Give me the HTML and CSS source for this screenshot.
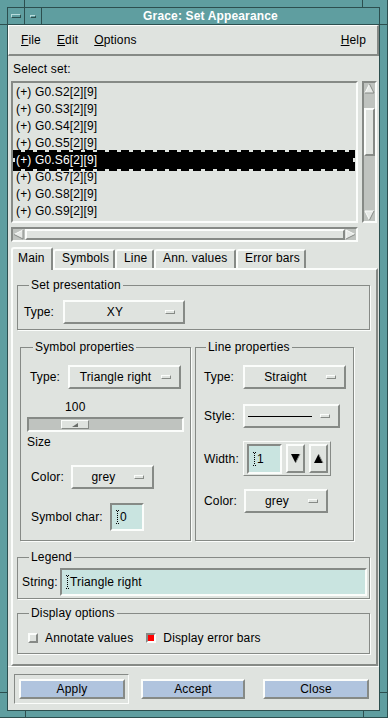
FILE: index.html
```html
<!DOCTYPE html>
<html lang="en">
<head>
    <meta charset="UTF-8">
    <title>Grace: Set Appearance</title>
    <link rel="stylesheet" href="styles.css">
</head>
<body>
<div class="frame">
  <div class="window">
    <div class="titlebar">
        <span class="tb-btn"><i class="tb-menu"></i></span>
        <span class="tb-btn"><i class="tb-min"></i></span>
        <span class="title">Grace: Set Appearance</span>
    </div>
    <div class="dialog">
        <div class="menubar">
            <span><u>F</u>ile</span>
            <span><u>E</u>dit</span>
            <span><u>O</u>ptions</span>
            <span class="help"><u>H</u>elp</span>
        </div>

        <div class="content">
            <div class="caption">Select set:</div>
            <div class="scrolled">
                <ul class="setlist">
                    <li>(+) G0.S2[2][9]</li>
                    <li>(+) G0.S3[2][9]</li>
                    <li>(+) G0.S4[2][9]</li>
                    <li>(+) G0.S5[2][9]</li>
                    <li class="sel">(+) G0.S6[2][9]</li>
                    <li>(+) G0.S7[2][9]</li>
                    <li>(+) G0.S8[2][9]</li>
                    <li>(+) G0.S9[2][9]</li>
                </ul>
                <div class="vscroll">
                    <svg width="11" height="11" viewBox="0 0 11 11"><path d="M5.5 1L10 10H1z" fill="#e6e9e6"/><path d="M5.5 1L1 10" stroke="#fbfdfb" fill="none"/><path d="M5.5 1L10 10H1" stroke="#868a86" fill="none"/></svg>
                    <span class="thumb"></span>
                    <svg class="end" width="11" height="11" viewBox="0 0 11 11"><path d="M1 1H10L5.5 10z" fill="#e6e9e6"/><path d="M10 1H1L5.5 10" stroke="#fbfdfb" fill="none"/><path d="M10 1L5.5 10" stroke="#868a86" fill="none"/></svg>
                </div>
                <div class="hscroll">
                    <svg width="11" height="11" viewBox="0 0 11 11"><path d="M1 5.5L10 1V10z" fill="#e6e9e6"/><path d="M10 1L1 5.5" stroke="#fbfdfb" fill="none"/><path d="M10 1V10L1 5.5" stroke="#868a86" fill="none"/></svg>
                    <span class="thumb"></span>
                    <svg width="11" height="11" viewBox="0 0 11 11"><path d="M10 5.5L1 1V10z" fill="#e6e9e6"/><path d="M1 10V1L10 5.5" stroke="#fbfdfb" fill="none"/><path d="M10 5.5L1 10" stroke="#868a86" fill="none"/></svg>
                </div>
            </div>

            <div class="tabs">
                <span class="tab active w-main">Main</span>
                <span class="tab w-sym">Symbols</span>
                <span class="tab w-line">Line</span>
                <span class="tab w-ann">Ann. values</span>
                <span class="tab w-err">Error bars</span>
            </div>

            <div class="panel">
                <fieldset class="group set-group">
                    <legend>Set presentation</legend>
                    <div class="row">
                        <span class="lbl w39">Type:</span>
                        <div class="option w122"><span class="opt-text">XY</span><span class="ind"></span></div>
                    </div>
                </fieldset>

                <div class="props">
                    <fieldset class="group sym-group">
                        <legend>Symbol properties</legend>
                        <div class="row pl3">
                            <span class="lbl w38">Type:</span>
                            <div class="option w113"><span class="opt-text">Triangle right</span><span class="ind"></span></div>
                        </div>
                        <div class="scale-value">100</div>
                        <div class="trough"><span class="knob"><svg width="6" height="4" viewBox="0 0 6 4"><path d="M6 0V4H0z" fill="#6a6e6a"/></svg></span></div>
                        <div class="scale-label">Size</div>
                        <div class="row pl4 color-row">
                            <span class="lbl w40">Color:</span>
                            <div class="option w83"><span class="opt-text">grey</span><span class="ind"></span></div>
                        </div>
                        <div class="row pl4 char-row">
                            <span class="lbl w79">Symbol char:</span>
                            <div class="tf char-field"><svg class="caret" width="3" height="14" viewBox="0 0 3 14"><path d="M0 .5h1M2 .5h1M0 13.5h1M2 13.5h1" stroke="#000"/><path d="M1.5 1v12" stroke="#000" stroke-dasharray="1 1"/></svg>0</div>
                        </div>
                    </fieldset>

                    <fieldset class="group line-group">
                        <legend>Line properties</legend>
                        <div class="row">
                            <span class="lbl w39">Type:</span>
                            <div class="option w103"><span class="opt-text">Straight</span><span class="ind"></span></div>
                        </div>
                        <div class="row style-row">
                            <span class="lbl w39">Style:</span>
                            <div class="option w97"><span class="dash-line"></span><span class="ind"></span></div>
                        </div>
                        <div class="row width-row">
                            <span class="lbl w39">Width:</span>
                            <div class="spinner">
                                <div class="tf width-field"><svg class="caret" width="3" height="14" viewBox="0 0 3 14"><path d="M0 .5h1M2 .5h1M0 13.5h1M2 13.5h1" stroke="#000"/><path d="M1.5 1v12" stroke="#000" stroke-dasharray="1 1"/></svg>1</div>
                                <span class="arrow-btn"><svg width="11" height="11" viewBox="0 0 11 11"><path d="M1 1h9L5.5 10z" fill="#000"/><path d="M10 1L5.5 10" stroke="#8a8e8a"/></svg></span>
                                <span class="arrow-btn"><svg width="11" height="11" viewBox="0 0 11 11"><path d="M5.5 1L10 10H1z" fill="#000"/><path d="M5.5 1L10 10" stroke="#8a8e8a"/></svg></span>
                            </div>
                        </div>
                        <div class="row color-row2">
                            <span class="lbl w40">Color:</span>
                            <div class="option w84"><span class="opt-text">grey</span><span class="ind"></span></div>
                        </div>
                    </fieldset>
                </div>

                <fieldset class="group legend-group">
                    <legend>Legend</legend>
                    <div class="row">
                        <span class="lbl w38">String:</span>
                        <div class="tf legend-field"><svg class="caret" width="3" height="14" viewBox="0 0 3 14"><path d="M0 .5h1M2 .5h1M0 13.5h1M2 13.5h1" stroke="#000"/><path d="M1.5 1v12" stroke="#000" stroke-dasharray="1 1"/></svg>Triangle right</div>
                    </div>
                </fieldset>

                <fieldset class="group display-group">
                    <legend>Display options</legend>
                    <div class="row">
                        <span class="check"></span><span class="check-text">Annotate values</span>
                        <span class="check on"></span><span class="check-text">Display error bars</span>
                    </div>
                </fieldset>
            </div>
        </div>

        <div class="actions">
            <div class="default-frame"><span class="btn">Apply</span></div>
            <span class="btn accept">Accept</span>
            <span class="btn close">Close</span>
        </div>
    </div>
  </div>
</div>
</body>
</html>
```

FILE: styles.css
```css
body{
    margin: 0;
    font-family: "Liberation Sans", Arial, sans-serif;
    font-size: 12px;
    letter-spacing: .15px;
    color: #000;
}
/*窗口边框 + 角上的分隔线*/
.frame{
    width: 388px;
    height: 718px;
    box-sizing: border-box;
    padding: 7px 8px 7px 7px;
    display: flex;
    background:
        linear-gradient(#2c4f4f, #2c4f4f) 24px 0 / 1px 7px no-repeat,
        linear-gradient(#2c4f4f, #2c4f4f) 0 24px / 7px 1px no-repeat,
        linear-gradient(#2c4f4f, #2c4f4f) 362px 0 / 1px 7px no-repeat,
        linear-gradient(#2c4f4f, #2c4f4f) 380px 24px / 8px 1px no-repeat,
        linear-gradient(#2c4f4f, #2c4f4f) 0 692px / 7px 1px no-repeat,
        linear-gradient(#2c4f4f, #2c4f4f) 380px 692px / 8px 1px no-repeat,
        linear-gradient(#2c4f4f, #2c4f4f) 25px 711px / 1px 7px no-repeat,
        linear-gradient(#2c4f4f, #2c4f4f) 363px 711px / 1px 7px no-repeat,
        linear-gradient(#2c4f4f, #2c4f4f) 0 717px / 388px 1px no-repeat,
        linear-gradient(#2c4f4f, #2c4f4f) 387px 0 / 1px 718px no-repeat,
        #5f9ea0;
}
.window{
    flex: 1;
    display: flex;
    flex-direction: column;
    border: 1px solid #2c4f4f;
}
.titlebar{
    height: 16px;
    display: flex;
    border-bottom: 1px solid #2c4f4f;
    background: #5f9ea0;
}
.tb-btn{
    width: 16px;
    border-right: 1px solid #2c4f4f;
    display: flex;
    align-items: center;
    justify-content: center;
}
.tb-menu, .tb-min{
    display: block;
    box-sizing: border-box;
    border: 1px solid;
    border-color: #b7dcdc #2c4f4f #2c4f4f #b7dcdc;
}
.tb-menu{
    width: 10px;
    height: 4px;
}
.tb-min{
    width: 6px;
    height: 3px;
}
.title{
    flex: 1;
    text-align: center;
    color: #fff;
    font-weight: bold;
    line-height: 16px;
}
.dialog{
    flex: 1;
    display: flex;
    flex-direction: column;
    background: #dfe3df;
}
.menubar{
    height: 31px;
    box-sizing: border-box;
    display: flex;
    align-items: center;
    gap: 16px;
    padding: 0 11px 0 12px;
    border-style: solid;
    border-width: 1px 2px 2px 1px;
    border-color: #fbfdfb #868a86 #868a86 #fbfdfb;
}
.menubar .help{
    margin-left: auto;
}
.content{
    flex: 1;
    display: flex;
    flex-direction: column;
    padding: 0 1px 0 3px;
}
.caption{
    margin-top: 6px;
    line-height: 14px;
    padding-left: 2px;
}
/*列表 + 滚动条*/
.scrolled{
    margin-top: 5px;
    display: grid;
    grid-template-columns: 347px 15px;
    grid-template-rows: 142px 15px;
    gap: 4px;
}
.setlist{
    margin: 0;
    padding: 1px 0 0;
    list-style: none;
    overflow: hidden;
    border: 2px solid;
    border-color: #868a86 #fbfdfb #fbfdfb #868a86;
}
.setlist li{
    height: 17px;
    line-height: 17px;
    margin: 0 3px 0 2px;
    padding-left: 1px;
    white-space: nowrap;
}
.setlist .sel{
    position: relative;
    background: #000;
    color: #fff;
}
.setlist .sel::after{
    content: "";
    position: absolute;
    top: -2px;
    bottom: -2px;
    left: -2px;
    right: -2px;
    background:
        repeating-linear-gradient(90deg, #000 0 8px, transparent 8px 12px) left top / 100% 2px no-repeat,
        repeating-linear-gradient(90deg, #000 0 8px, transparent 8px 12px) left bottom / 100% 2px no-repeat,
        repeating-linear-gradient(#000 0 8px, transparent 8px 12px) left top / 2px 100% no-repeat,
        repeating-linear-gradient(#000 0 8px, transparent 8px 12px) right top / 2px 100% no-repeat;
}
.vscroll, .hscroll{
    display: flex;
    background: #bfc3bf;
    border: 2px solid;
    border-color: #868a86 #fbfdfb #fbfdfb #868a86;
}
.vscroll svg, .hscroll svg{
    display: block;
    flex: none;
}
.vscroll{
    flex-direction: column;
    align-items: center;
}
.vscroll .thumb{
    width: 11px;
    height: 48px;
    margin-top: 14px;
}
.vscroll .end{
    margin-top: auto;
}
.hscroll{
    align-items: center;
}
.hscroll .thumb{
    flex: 1;
    height: 11px;
    margin-left: 1px;
}
.thumb{
    box-sizing: border-box;
    border: 2px solid;
    border-color: #fbfdfb #868a86 #868a86 #fbfdfb;
    background: #dfe3df;
}
/*标签页*/
.tabs{
    margin-top: 5px;
    height: 21px;
    display: flex;
    align-items: flex-end;
}
.tab{
    height: 19px;
    box-sizing: border-box;
    padding-left: 7px;
    line-height: 14px;
    white-space: nowrap;
    border-style: solid;
    border-width: 2px 2px 0 2px;
    border-color: #fbfdfb #868a86 #fbfdfb #fbfdfb;
    border-radius: 3px 2px 0 0;
}
.tab.active{
    position: relative;
    z-index: 1;
    height: 23px;
    margin-bottom: -2px;
    padding-top: 2px;
    background: #dfe3df;
}
.w-main{ width: 42px; padding-left: 5px; }
.w-sym{ width: 62px; }
.w-line{ width: 39px; }
.w-ann{ width: 82px; }
.w-err{ width: 70px; }

.panel{
    flex: 1;
    display: flex;
    flex-direction: column;
    border: 2px solid;
    border-color: #fbfdfb #868a86 #868a86 #fbfdfb;
}
.group{
    min-width: 0;
    margin: 0;
    border: 1px solid #868a86;
    box-shadow: 1px 1px 0 #fbfdfb;
}
.group legend{
    padding: 0 2px;
    line-height: 14px;
}
.set-group{
    margin: 8px 6px 0 4px;
    padding: 8px 0 5px 6px;
}
.set-group legend{ margin-left: 5px; }
.props{
    display: flex;
    gap: 4px;
    margin: 10px 22px 0 7px;
}
.sym-group{
    width: 171px;
    box-sizing: border-box;
    padding: 11px 6px 9px 6px;
}
.sym-group legend{ margin-left: 6px; }
.line-group{
    flex: 1;
    padding: 11px 0 0 8px;
}
.line-group legend{ margin-left: 2px; }
.legend-group{
    margin: 9px 6px 0 4px;
    padding: 4px 2px 2px 4px;
}
.legend-group legend{ margin-left: 7px; }
.display-group{
    margin: 7px 6px 0 4px;
    padding: 10px 0 7px 10px;
}
.display-group legend{ margin-left: 1px; }

.row{
    display: flex;
    align-items: center;
}
.pl3{ padding-left: 3px; }
.pl4{ padding-left: 4px; }
.lbl{ flex: none; white-space: nowrap; }
.w38{ width: 38px; }
.w39{ width: 39px; }
.w40{ width: 40px; }
.w79{ width: 79px; }

/*选项按钮*/
.option{
    height: 24px;
    box-sizing: border-box;
    display: flex;
    align-items: center;
    border: 2px solid;
    border-color: #fbfdfb #868a86 #868a86 #fbfdfb;
}
.w122{ width: 122px; }
.w113{ width: 113px; }
.w103{ width: 103px; }
.w97{ width: 97px; }
.w83{ width: 83px; }
.w84{ width: 84px; }
.opt-text{
    flex: 1;
    text-align: center;
    white-space: nowrap;
}
.ind{
    width: 10px;
    height: 4px;
    box-sizing: border-box;
    margin-right: 8px;
    border: 1px solid;
    border-color: #fbfdfb #868a86 #868a86 #fbfdfb;
}
.dash-line{
    width: 64px;
    height: 1px;
    margin: 0 auto 0 3px;
    background: #000;
}
/*滑块*/
.scale-value{
    margin-top: 11px;
    line-height: 14px;
    padding-left: 38px;
}
.trough{
    margin-top: 3px;
    height: 15px;
    box-sizing: border-box;
    padding: 1px 0 0 32px;
    background: #bfc3bf;
    border: 2px solid;
    border-color: #868a86 #fbfdfb #fbfdfb #868a86;
}
.knob{
    width: 28px;
    height: 9px;
    box-sizing: border-box;
    display: flex;
    align-items: center;
    justify-content: center;
    background: #dfe3df;
    border: 1px solid;
    border-color: #fbfdfb #868a86 #868a86 #fbfdfb;
}
.knob svg{ display: block; }
.scale-label{
    margin-top: 3px;
    line-height: 14px;
}
.color-row{ margin-top: 16px; }
.char-row{ margin-top: 14px; }
.style-row{ margin-top: 15px; }
.width-row{ margin-top: 13px; }
.color-row2{ margin-top: 13px; }

/*输入框*/
.tf{
    box-sizing: border-box;
    display: flex;
    align-items: center;
    padding-left: 4px;
    background: #c9e4e0;
    border: 2px solid;
    border-color: #868a86 #fbfdfb #fbfdfb #868a86;
    white-space: nowrap;
}
.caret{
    display: block;
    flex: none;
    margin-right: 1px;
}
.char-field{
    width: 34px;
    height: 28px;
}
.legend-field{
    flex: 1;
    height: 28px;
}
.spinner{
    width: 88px;
    height: 35px;
    box-sizing: border-box;
    display: flex;
    align-items: center;
    gap: 4px;
    padding: 0 2px 0 3px;
    border: 1px solid;
    border-color: #fbfdfb #868a86 #868a86 #fbfdfb;
}
.width-field{
    width: 35px;
    height: 30px;
}
.arrow-btn{
    width: 19px;
    height: 29px;
    box-sizing: border-box;
    display: flex;
    align-items: center;
    justify-content: center;
    border: 2px solid;
    border-color: #fbfdfb #868a86 #868a86 #fbfdfb;
}
/*复选框*/
.check{
    width: 10px;
    height: 10px;
    box-sizing: border-box;
    border: 2px solid;
    border-color: #fbfdfb #868a86 #868a86 #fbfdfb;
    background: #dfe3df;
}
.check.on{
    border-color: #868a86 #fbfdfb #fbfdfb #868a86;
    background: #f00;
}
.check-text{
    margin: 0 13px 0 7px;
    line-height: 16px;
}
/*底部按钮*/
.actions{
    height: 44px;
    box-sizing: border-box;
    display: flex;
    align-items: flex-start;
    padding: 7px 0 0 6px;
    border-top: 1px solid #fbfdfb;
}
.default-frame{
    padding: 4px 3px 4px 4px;
    border: 1px solid;
    border-color: #868a86 #fbfdfb #fbfdfb #868a86;
}
.btn{
    display: block;
    width: 106px;
    height: 20px;
    box-sizing: border-box;
    text-align: center;
    line-height: 16px;
    background: #b0c4de;
    border: 2px solid;
    border-color: #fbfdfb #868a86 #868a86 #fbfdfb;
}
.accept{
    width: 104px;
    margin: 5px 0 0 12px;
}
.close{
    margin: 5px 0 0 18px;
}
```
